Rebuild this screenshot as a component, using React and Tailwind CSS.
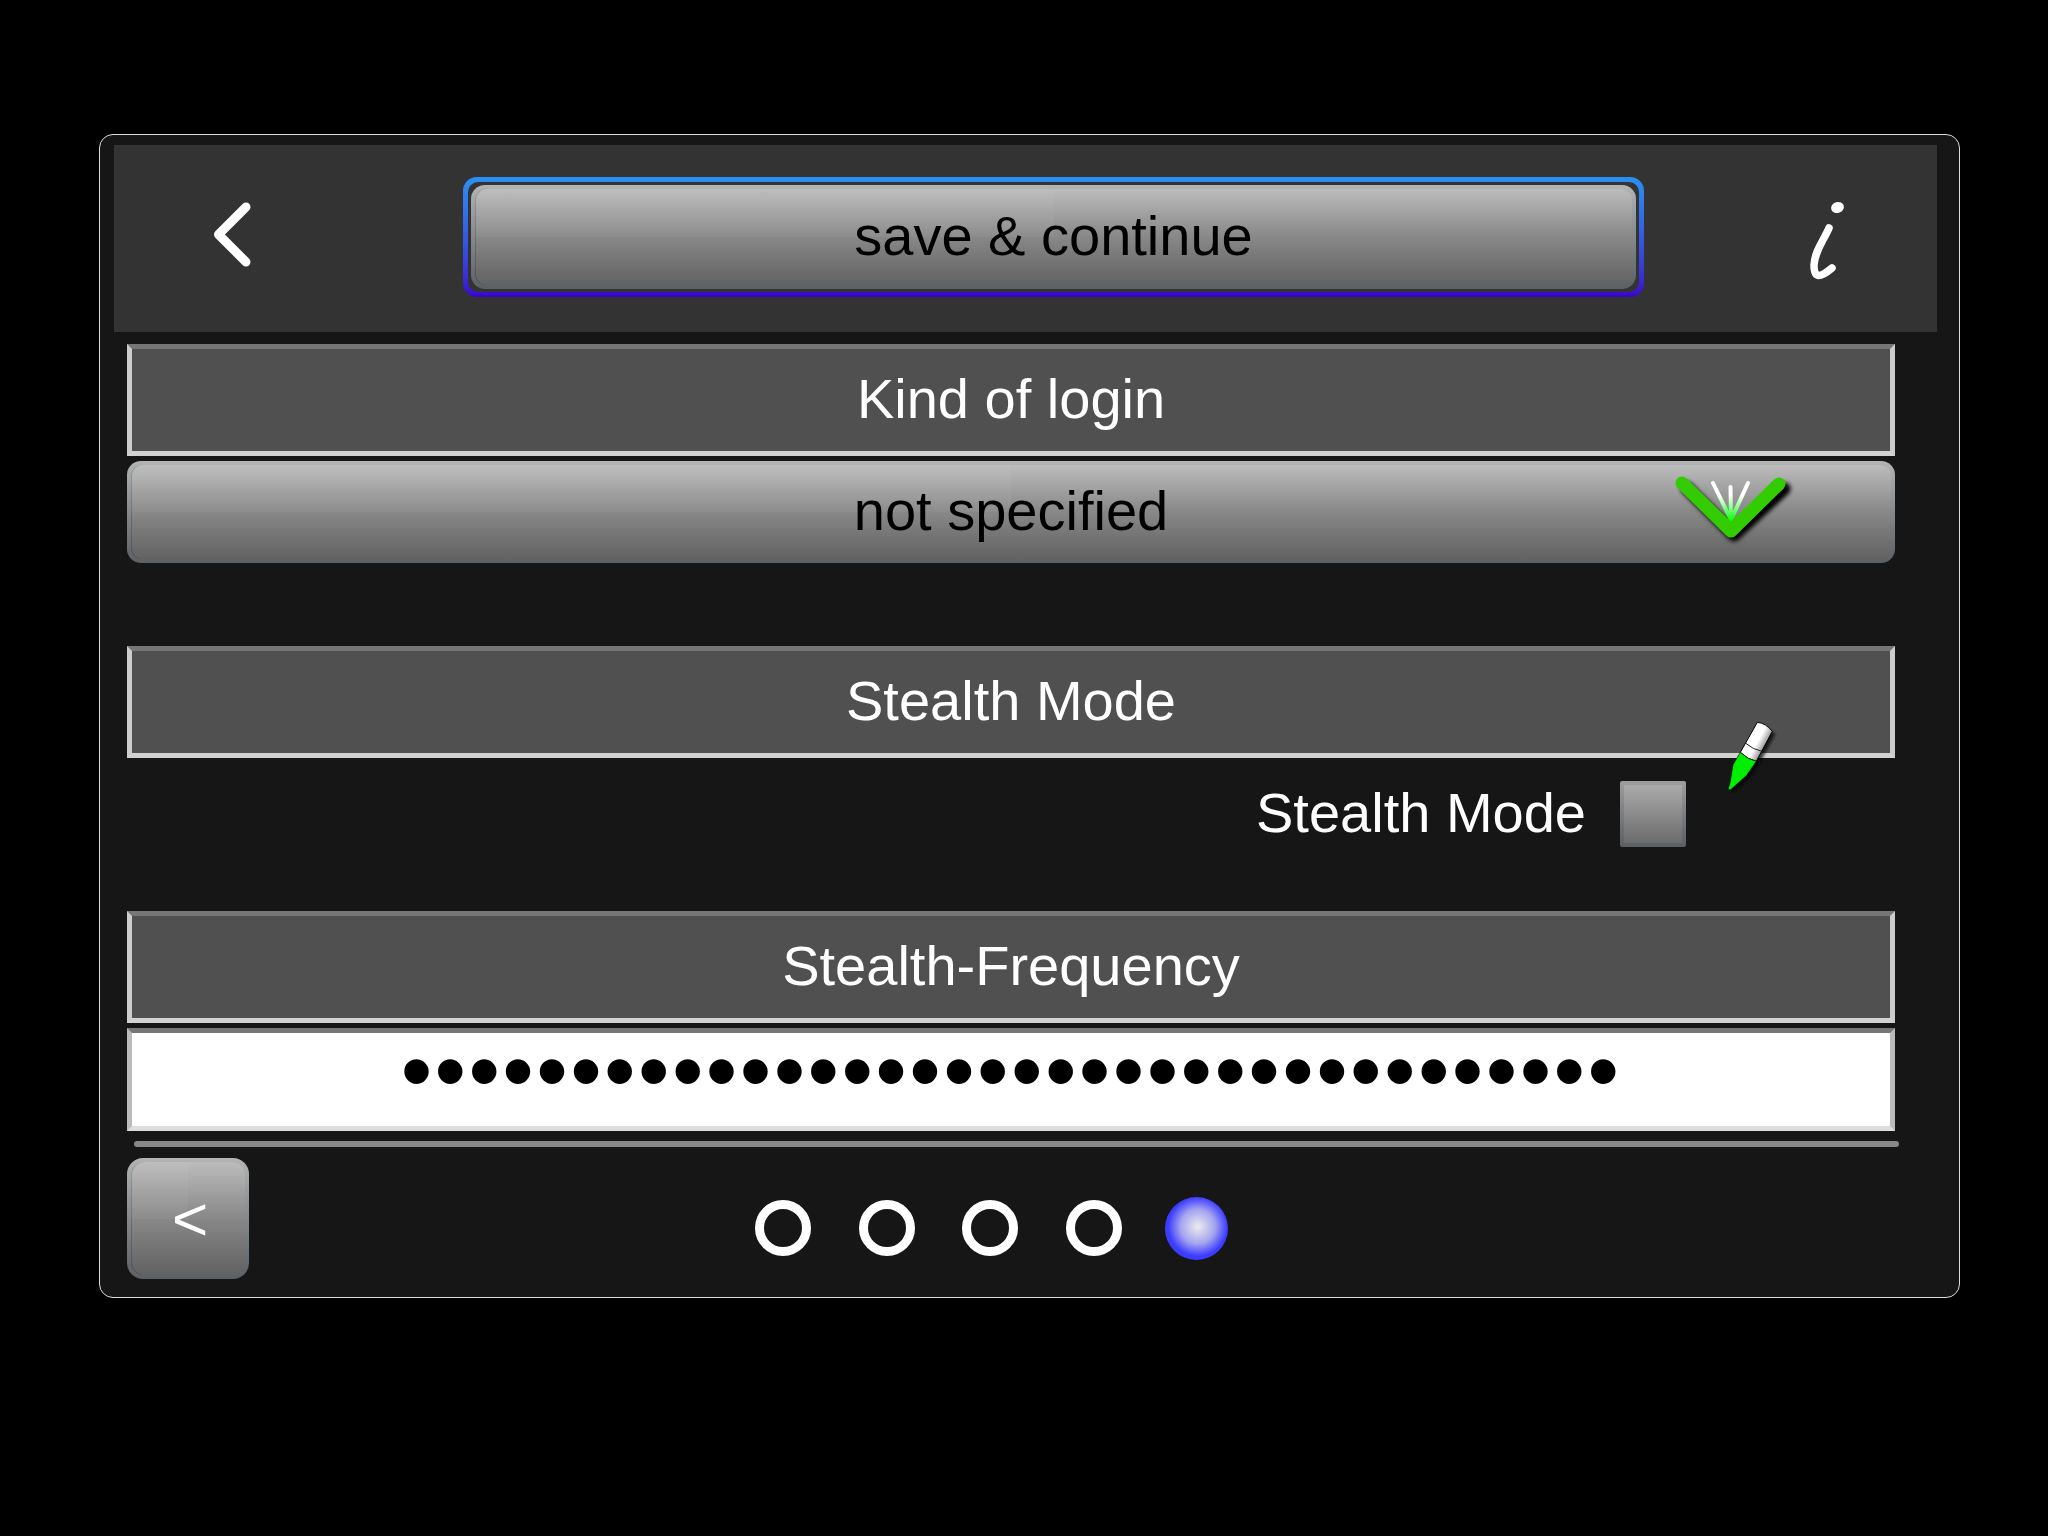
import React from "react";

function Glass({ className, inner, children }) {
  return (
    <div className={`bg-linear-to-b from-[#b2b4b6] via-[#85898b] to-[#5a6064] p-[4px] ${className}`}>
      <div className={`relative isolate overflow-hidden h-full bg-linear-to-b from-[#bcbcbc] via-[#888888] to-[#626262] shadow-[inset_1px_0_0_rgba(0,0,0,0.2)] flex items-center justify-center ${inner}`}>
        <div className="absolute left-0 top-0 -z-10 w-1/2 h-1/2 bg-white/[0.04]" />
        {children}
      </div>
    </div>
  );
}

function SectionBar({ children }) {
  return (
    <div className="flex items-center justify-center h-[112px] pb-[2px] bg-[#505050] border-[5px] border-t-[#767676] border-x-[#cccccc] border-b-[#d2d2d2] text-white text-[56px] leading-none">
      {children}
    </div>
  );
}

function GreenChevron() {
  return (
    <svg className="absolute right-[101px] top-[8px] overflow-visible" width="118" height="70" viewBox="1672 473 118 70">
      <defs>
        <linearGradient id="ray" gradientUnits="userSpaceOnUse" x1="1731" y1="482" x2="1731" y2="521">
          <stop offset="0.35" stopColor="#ffffff" />
          <stop offset="1" stopColor="#00ff00" />
        </linearGradient>
        <filter id="chevronShadow" x="-20%" y="-20%" width="140%" height="150%">
          <feGaussianBlur stdDeviation="2" />
        </filter>
      </defs>
      <path d="M1684 485 L1731 532 L1781 486" transform="translate(3 3)" fill="none" stroke="#000" strokeWidth="13" strokeLinecap="round" strokeLinejoin="round" filter="url(#chevronShadow)" />
      <path d="M1713 483 L1731 520 M1730.5 487 L1731 520 M1748 483 L1731 520" fill="none" stroke="url(#ray)" strokeWidth="4" strokeLinecap="round" />
      <path d="M1682 483 L1731 531 L1779 484" fill="none" stroke="#33cc00" strokeWidth="13" strokeLinecap="round" strokeLinejoin="round" />
    </svg>
  );
}

function PenIcon() {
  return (
    <svg className="absolute left-[1623px] top-[583px]" width="55" height="75" viewBox="370 55 165 225">
      <defs>
        <linearGradient id="tube" gradientUnits="userSpaceOnUse" x1="445" y1="110" x2="510" y2="145">
          <stop offset="0.45" stopColor="#ffffff" />
          <stop offset="1" stopColor="#555555" />
        </linearGradient>
        <filter id="penShadow" x="-30%" y="-30%" width="160%" height="160%">
          <feGaussianBlur stdDeviation="5" />
        </filter>
      </defs>
      <path d="M473 68 L518 95 L470 185 L440 228 L393 270 L385 270 L392 245 L400 195 L422 158 Z" transform="translate(9 8)" fill="#000" opacity="0.7" filter="url(#penShadow)" />
      <path d="M473 68 Q498 70 518 95 L470 185 Q445 180 422 158 Z" fill="url(#tube)" stroke="#000" strokeWidth="3" strokeLinejoin="round" />
      <path d="M437 130 Q460 150 487 155" fill="none" stroke="#222" strokeWidth="3" />
      <path d="M422 158 Q445 180 470 185 L440 228 L393 270 L385 270 L392 245 L400 195 Z" fill="#00ee00" stroke="#0a0a0a" strokeWidth="2" strokeLinejoin="round" />
    </svg>
  );
}

export default function App() {
  return (
    <div className="h-[1536px] overflow-hidden bg-black pt-[134px] pl-[99px] font-['Liberation_Sans',Arial,sans-serif]">
      <div className="relative w-[1861px] h-[1164px] border border-[#dddddd] rounded-[14px] bg-[#161616] pt-[10px]">
        {/* Top bar */}
        <div className="flex items-center h-[187px] w-[1823px] ml-[14px] bg-[#333333]">
          <svg className="ml-[91px] -mt-[7px] shrink-0" width="50" height="80" viewBox="205 195 50 80">
            <path d="M246 207 L218.5 234.5 L246 262" fill="none" stroke="#fff" strokeWidth="9" strokeLinecap="round" strokeLinejoin="round" />
          </svg>
          <div className="ml-[208px] -mt-[3px] w-[1181px] h-[120px] p-[5px] rounded-[14px] bg-linear-to-b from-[#2a90f2] to-[#3a00cc]">
            <div className="h-full p-[3px] rounded-[10px] bg-[#333333]">
              <Glass className="h-full rounded-[14px]" inner="rounded-[11px] text-black text-[56px] pb-[2px]">
                save &amp; continue
              </Glass>
            </div>
          </div>
          <svg className="ml-[156px] mt-[3px] shrink-0" width="50" height="90" viewBox="1800 195 50 90">
            <ellipse cx="1837.5" cy="207.5" rx="6.5" ry="5.5" fill="#fff" transform="rotate(-15 1837.5 207.5)" />
            <path d="M1829 228 C1824 240 1815 250 1814 265 C1814 279 1820 278 1832 268" fill="none" stroke="#fff" strokeWidth="7.5" strokeLinecap="round" />
          </svg>
        </div>

        <div className="w-[1768px] ml-[27px] mt-[12px]">
          <SectionBar>Kind of login</SectionBar>
          <Glass className="mt-[5px] h-[102px] rounded-[14px]" inner="rounded-[11px] text-black text-[56px] pb-[2px]">
            not specified
            <GreenChevron />
          </Glass>
          <div className="h-[83px]" />
          <SectionBar>Stealth Mode</SectionBar>
          {/* Checkbox row */}
          <div className="flex justify-end h-[153px] pt-[23px] pr-[209px]">
            <span className="text-white text-[56px] leading-[64px] mr-[34px]">Stealth Mode</span>
            <div className="w-[66px] h-[66px] p-[4px] rounded-[2px] bg-linear-to-b from-[#9c9ea0] to-[#5c5f62]">
              <div className="h-full bg-linear-to-b from-[#ababab] to-[#6c6c6c]" />
            </div>
          </div>
          <SectionBar>Stealth-Frequency</SectionBar>
          <div className="flex items-center justify-center h-[103px] mt-[5px] bg-white border-[5px] border-t-[#777777] border-l-[#bbbbbb] border-r-[#bbbbbb] border-b-[#dddddd] pb-[17px] text-black text-[90px] leading-[60px] tracking-[2.4px]">
            {"•".repeat(36)}
          </div>
          <div className="w-[1765px] h-[6px] ml-[7px] mt-[10px] rounded-full bg-[#888888]" />
          {/* Footer */}
          <div className="flex items-center h-[121px] mt-[11px]">
            <Glass className="w-[122px] h-[121px] rounded-[16px]" inner="rounded-[13px] text-white text-[62px]">
              <span className="pl-[4px]">&lt;</span>
            </Glass>
            <div className="flex items-center ml-[506px] mt-[19px] gap-[47.5px]">
              <div className="size-[56px] rounded-full border-[9px] border-white" />
              <div className="size-[56px] rounded-full border-[9px] border-white" />
              <div className="size-[56px] rounded-full border-[9px] border-white" />
              <div className="size-[56px] rounded-full border-[9px] border-white" />
              <div className="size-[63px] -ml-[4px] rounded-full bg-[radial-gradient(circle_closest-side_at_52%_47%,#ececec,#a4a4f0_58%,#3c3cff)]" />
            </div>
          </div>
          <PenIcon />
        </div>
      </div>
    </div>
  );
}
